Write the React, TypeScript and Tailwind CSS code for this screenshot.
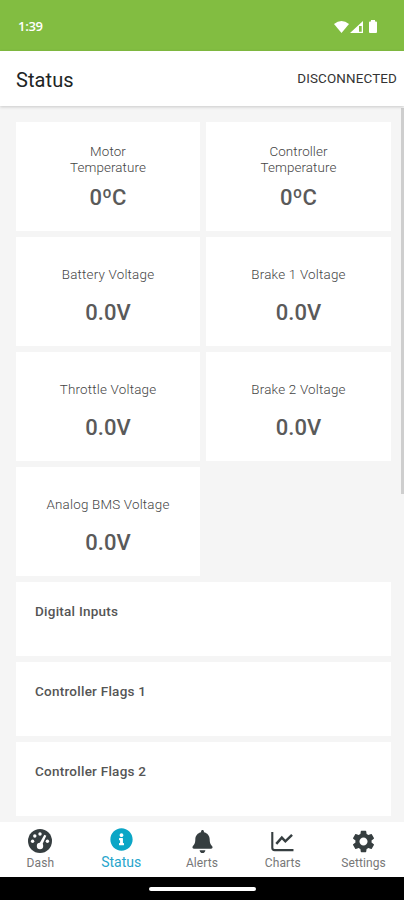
import React from "react";
import { FaBell, FaInfoCircle } from "react-icons/fa";
import { MdSettings } from "react-icons/md";

const readings = [
  { label: "Motor Temperature", value: "0ºC", wrap: true },
  { label: "Controller Temperature", value: "0ºC", wrap: true },
  { label: "Battery Voltage", value: "0.0V" },
  { label: "Brake 1 Voltage", value: "0.0V" },
  { label: "Throttle Voltage", value: "0.0V" },
  { label: "Brake 2 Voltage", value: "0.0V" },
  { label: "Analog BMS Voltage", value: "0.0V" },
];

const sections = ["Digital Inputs", "Controller Flags 1", "Controller Flags 2"];

const DashIcon = () => (
  <svg width="24" height="24" viewBox="0 0 24 24" fill="currentColor">
    <circle cx="12" cy="12" r="12" />
    <g fill="white">
      <circle cx="12" cy="5" r="1.7" />
      <circle cx="6.800" cy="7" r="1.700" />
      <circle cx="4.600" cy="12.300" r="1.700" />
      <circle cx="19.400" cy="12.300" r="1.700" />
      <circle cx="12" cy="17" r="3.200" />
      <path d="M16.300 5.700L18.300 6.700L13.900 16.500L11 15.300Z" />
    </g>
  </svg>
);

const ChartIcon = () => (
  <svg width="23" height="21" viewBox="0 0 24 22" fill="none" stroke="currentColor" strokeWidth="2.2">
    <path d="M1.300 1V17.500Q1.300 20 3.800 20H23.500" />
    <path d="M5.500 13.500L11.300 7L15 10.800L22 4" strokeWidth="2.600" />
  </svg>
);

const tabs = [
  { label: "Dash", icon: <DashIcon /> },
  { label: "Status", icon: <FaInfoCircle size={23} />, active: true },
  { label: "Alerts", icon: <FaBell size={23} className="ml-0.5" /> },
  { label: "Charts", icon: <ChartIcon /> },
  { label: "Settings", icon: <MdSettings size={27} /> },
];

const StatusBar = () => (
  <div className="h-[51px] shrink-0 bg-[#82bd41] flex items-center justify-between pl-[18px] pr-[26px] pt-0.5 text-white">
    <span className="text-[13px] font-semibold tracking-[-0.3px] font-['Open_Sans',sans-serif]">1:39</span>
    <div className="flex items-center">
      <svg width="15" height="12" viewBox="0 0 15 12" fill="currentColor">
        <path d="M0 3Q7.500-3 15 3L7.500 12Z" />
      </svg>
      <svg width="13" height="12" viewBox="0 0 13 12" fill="currentColor" className="ml-px">
        <path fillRule="evenodd" d="M0 12L13 0V12ZM9 5V10.700H11.700V5Z" />
      </svg>
      <svg width="8" height="13" viewBox="0 0 8 13" fill="currentColor" className="ml-1.5 mr-px">
        <path d="M2 1.500V0H6V1.500H7Q8 1.500 8 2.500V12Q8 13 7 13H1Q0 13 0 12V2.500Q0 1.500 1 1.500Z" />
      </svg>
    </div>
  </div>
);

export default function App() {
  return (
    <div className="w-[404px] h-[900px] flex flex-col overflow-hidden bg-[#f5f5f5] font-[Roboto,sans-serif]">
      <StatusBar />

      {/* Header */}
      <header className="relative z-10 h-[55px] shrink-0 flex items-center justify-between pl-4 pr-[7px] pt-0.5 bg-white shadow-[0_1px_3px_rgba(0,0,0,0.18)]">
        <h1 className="text-[20px] font-[450] tracking-[0.1px] text-[#202424]">Status</h1>
        <span className="text-[13.4px] tracking-[0.15px] text-[#333]">DISCONNECTED</span>
      </header>

      {/* Content */}
      <main className="relative flex-1 min-h-0 overflow-hidden pl-4 pr-[13px] pt-4">
        <div className="grid grid-cols-[184px_185px] gap-x-1.5 gap-y-1.5">
          {readings.map((item) => (
            <div
              key={item.label}
              className={`h-[109px] bg-white flex flex-col items-center text-center ${item.wrap ? "pt-[22px]" : "pt-[30px]"}`}
            >
              <div className={`text-[13.4px] leading-4 font-light text-[#444] ${item.wrap ? "w-20 tracking-[0.1px]" : "tracking-[0.2px]"}`}>
                {item.label}
              </div>
              <div className={`text-[22px] leading-[26px] font-medium text-[#5a5a5a] ${item.wrap ? "mt-[9px]" : "mt-[17px]"}`}>
                {item.value}
              </div>
            </div>
          ))}
        </div>

        <div className="mt-1.5 flex flex-col gap-1.5">
          {sections.map((title) => (
            <div key={title} className="h-[74px] bg-white pl-[19px] pt-5 text-[13.5px] leading-[18px] font-medium tracking-[0.25px] text-[#555]">
              {title}
            </div>
          ))}
        </div>

        <div className="absolute right-0 top-0.5 w-[3px] h-[386px] bg-[#cecece]" />
      </main>

      {/* Bottom tabs */}
      <nav className="h-[55px] shrink-0 grid grid-cols-5 bg-white">
        {tabs.map((tab) => (
          <div
            key={tab.label}
            className={`flex flex-col items-center ${tab.active ? "text-[#0ba6c6]" : "text-[#363e40]"}`}
          >
            <div className={`h-[26px] flex items-center ${tab.active ? "mt-1" : "mt-[6px]"}`}>{tab.icon}</div>
            <span className={tab.active ? "mt-px text-[14px] leading-[18px] text-[#27a5cc]" : "mt-px text-[12px] leading-4 tracking-[0.1px] text-[#777]"}>
              {tab.label}
            </span>
          </div>
        ))}
      </nav>

      <div className="h-[23px] shrink-0 bg-black flex justify-center pt-[10px]">
        <div className="w-[107px] h-1 rounded-full bg-white" />
      </div>
    </div>
  );
}
